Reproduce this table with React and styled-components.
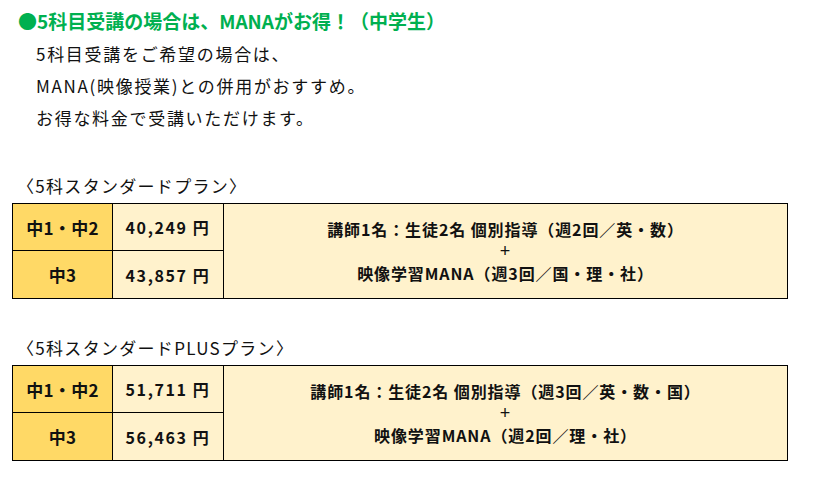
import React from 'react';
import styled, { createGlobalStyle } from 'styled-components';

const GlobalStyle = createGlobalStyle`
  body {
    margin: 0;
    background: #ffffff;
    font-family: "Noto Sans CJK JP", "Noto Sans", sans-serif;
    color: #111111;
  }
`;

const Page = styled.div`
  width: 821px;
  height: 486px;
  padding: 10px 0 0 12px;
  box-sizing: border-box;
`;

const Heading = styled.h2`
  margin: 0 0 0 6px;
  font-size: 19px;
  font-weight: 700;
  line-height: 22px;
  color: #00b050;
`;

const Lead = styled.div`
  margin: 6px 0 0 24px;
  font-size: 17px;
  letter-spacing: 1.7px;
  line-height: 32px;
`;

const PlanTitle = styled.div`
  margin: ${({ $top }) => $top}px 0 0 5px;
  font-size: 17px;
  letter-spacing: 1.3px;
  line-height: 22px;
`;

const PriceTable = styled.div`
  margin-top: 6px;
  width: 776px;
  display: grid;
  grid-template-columns: 100px 111px 1fr;
  grid-template-rows: 47px 47px;
  border: 1px solid #000;
  box-sizing: border-box;
  background: #fff2cc;
  font-weight: 700;
  font-size: 17px;
`;

const Cell = styled.div`
  display: flex;
  align-items: center;
  justify-content: center;
  border-right: 1px solid #000;
  border-bottom: ${({ $last }) => ($last ? 'none' : '1px solid #000')};
  background: ${({ $grade }) => ($grade ? '#ffd966' : '#fff2cc')};
  font-size: ${({ $price }) => ($price ? '16px' : '17px')};
  letter-spacing: ${({ $price }) => ($price ? '1.6px' : '0.3px')};
`;

const Detail = styled.div`
  grid-column: 3;
  grid-row: 1 / span 2;
  display: flex;
  flex-direction: column;
  align-items: center;
  justify-content: center;
  font-size: 16px;
  line-height: 22px;
  letter-spacing: 0.9px;
`;

const Plus = styled.span`
  font-family: "Liberation Sans", sans-serif;
  font-weight: 400;
  font-size: 18px;
  line-height: 22px;
`;

const plans = [
  {
    title: '〈5科スタンダードプラン〉',
    top: 41,
    rows: [
      ['中1・中2', '40,249 円'],
      ['中3', '43,857 円'],
    ],
    lines: ['講師1名：生徒2名 個別指導（週2回／英・数）', '映像学習MANA（週3回／国・理・社）'],
  },
  {
    title: '〈5科スタンダードPLUSプラン〉',
    top: 38,
    rows: [
      ['中1・中2', '51,711 円'],
      ['中3', '56,463 円'],
    ],
    lines: ['講師1名：生徒2名 個別指導（週3回／英・数・国）', '映像学習MANA（週2回／理・社）'],
  },
];

export default function App() {
  return (
    <Page>
      <GlobalStyle />
      <Heading>●5科目受講の場合は、MANAがお得！（中学生）</Heading>
      <Lead>
        5科目受講をご希望の場合は、
        <br />
        MANA(映像授業)との併用がおすすめ。
        <br />
        お得な料金で受講いただけます。
      </Lead>
      {plans.map((plan) => (
        <React.Fragment key={plan.title}>
          <PlanTitle $top={plan.top}>{plan.title}</PlanTitle>
          <PriceTable>
            <Cell $grade>{plan.rows[0][0]}</Cell>
            <Cell $price>{plan.rows[0][1]}</Cell>
            <Detail>
              <span>{plan.lines[0]}</span>
              <Plus>+</Plus>
              <span>{plan.lines[1]}</span>
            </Detail>
            <Cell $grade $last>{plan.rows[1][0]}</Cell>
            <Cell $price $last>{plan.rows[1][1]}</Cell>
          </PriceTable>
        </React.Fragment>
      ))}
    </Page>
  );
}
